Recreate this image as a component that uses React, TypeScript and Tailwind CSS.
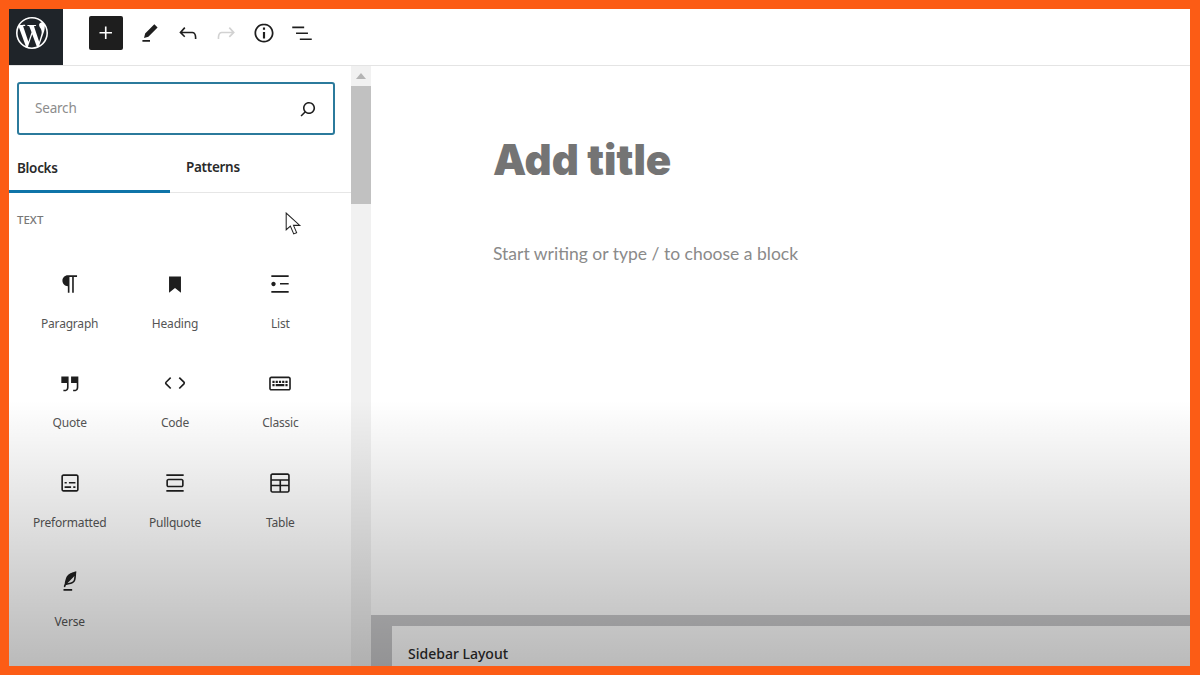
import React from "react";
import { SiWordpress } from "react-icons/si";

const P = ({ d, className = "", size = 24 }: { d: string; className?: string; size?: number }) => (
  <svg width={size} height={size} viewBox="0 0 24 24" fill="currentColor" className={className}>
    <path d={d} />
  </svg>
);

const icons = {
  plus: "M11 12.5V17.5H12.5V12.5H17.5V11H12.5V6H11V11H6V12.5H11Z",
  edit: "m19 7-3-3-8.5 8.5-1 4 4-1L19 7Zm-7 11.5H5V20h7v-1.5Z",
  undo: "M18.3 11.7c-.6-.6-1.4-.9-2.3-.9H6.7l2.9-3.3-1.1-1-4.5 5L8.5 16l1-1-2.7-2.7H16c.5 0 .9.2 1.3.5 1 1 1 3.4 1 4.5v.3h1.5v-.2c0-1.5 0-4.3-1.5-5.7z",
  redo: "M15.6 6.5l-1.1 1 2.9 3.3H8c-.9 0-1.7.3-2.3.9-1.4 1.5-1.4 4.2-1.4 5.6v.2h1.5v-.3c0-1.1 0-3.5 1-4.5.3-.3.7-.5 1.3-.5h9.2L14.5 15l1.1 1.1 4.6-4.6-4.6-5z",
  info: "M12 3.2c-4.8 0-8.8 3.9-8.8 8.8 0 4.8 3.9 8.8 8.8 8.8 4.8 0 8.8-3.9 8.8-8.8 0-4.8-4-8.8-8.8-8.8zm0 16c-4 0-7.2-3.3-7.2-7.2C4.8 8 8 4.8 12 4.8s7.2 3.3 7.2 7.2c0 4-3.2 7.2-7.2 7.2zM11 17h2v-6h-2v6zm0-8h2V7h-2v2z",
  listView: "M3 6h11v1.5H3V6Zm3.5 5.5h11V13h-11v-1.5ZM21 17H10v1.5h11V17Z",
  search: "M13 5c-3.3 0-6 2.7-6 6 0 1.4.5 2.7 1.3 3.7l-3.8 3.8 1.1 1.1 3.8-3.8c1 .8 2.3 1.3 3.7 1.3 3.3 0 6-2.7 6-6S16.3 5 13 5zm0 10.5c-2.5 0-4.5-2-4.5-4.5s2-4.5 4.5-4.5 4.5 2 4.5 4.5-2 4.5-4.5 4.5z",
  paragraph: "m9.99609 14v-.2251l.00391.0001v6.225h1.5v-14.5h2.5v14.5h1.5v-14.5h3v-1.5h-8.50391c-2.76142 0-5 2.23858-5 5 0 2.7614 2.23858 5 5 5z",
  heading: "M6.5 5h11v15l-5.5-4.2L6.5 20z",
  list: "M4 4v1.5h16V4H4zm8 8.5h8V11h-8v1.5zM4 20h16v-1.5H4V20zm4-8c0-1.1-.9-2-2-2s-2 .9-2 2 .9 2 2 2 2-.9 2-2z",
  quote: "M13 6v6h5.2v4c0 .8-.2 1.4-.5 1.7-.6.6-1.6.6-2.5.5h-.3v1.5h.5c1 0 2.3-.1 3.3-1 .6-.6 1-1.6 1-2.8V6H13zm-9 6h5.2v4c0 .8-.2 1.4-.5 1.7-.6.6-1.6.6-2.5.5h-.3v1.5h.5c1 0 2.3-.1 3.3-1 .6-.6 1-1.6 1-2.8V6H4v6z",
  code: "M20.8 10.7l-4.3-4.3-1.1 1.1 4.3 4.3c.1.1.1.3 0 .4l-4.3 4.3 1.1 1.1 4.3-4.3c.7-.8.7-1.9 0-2.6zM4.2 11.8l4.3-4.3-1-1-4.3 4.3c-.7.7-.7 1.8 0 2.5l4.3 4.3 1.1-1.1-4.3-4.3c-.2-.1-.2-.3-.1-.4z",
  classic: "M20 6H4c-1.1 0-2 .9-2 2v9c0 1.1.9 2 2 2h16c1.1 0 2-.9 2-2V8c0-1.1-.9-2-2-2zm.5 11c0 .3-.2.5-.5.5H4c-.3 0-.5-.2-.5-.5V8c0-.3.2-.5.5-.5h16c.3 0 .5.2.5.5v9zM10 10H8v2h2v-2zm-5 2h2v-2H5v2zm8-2h-2v2h2v-2zm-5 5h8v-2H8v2zm6-3h2v-2h-2v2zm3 0h2v-2h-2v2zm0 3h2v-2h-2v2zM5 15h2v-2H5v2z",
  pre: "M18 4H6c-1.1 0-2 .9-2 2v12c0 1.1.9 2 2 2h12c1.1 0 2-.9 2-2V6c0-1.1-.9-2-2-2zm.5 14c0 .3-.2.5-.5.5H6c-.3 0-.5-.2-.5-.5V6c0-.3.2-.5.5-.5h12c.3 0 .5.2.5.5v12zM7 16.5h6V15H7v1.5zm4-4h6V11h-6v1.5zM9 11H7v1.5h2V11zm6 5.5h2V15h-2v1.5z",
  pull: "M18 8H6c-1.1 0-2 .9-2 2v4c0 1.1.9 2 2 2h12c1.1 0 2-.9 2-2v-4c0-1.1-.9-2-2-2zm.5 6c0 .3-.2.5-.5.5H6c-.3 0-.5-.2-.5-.5v-4c0-.3.2-.5.5-.5h12c.3 0 .5.2.5.5v4zM4 4v1.5h16V4H4zm0 16h16v-1.5H4V20z",
  table: "M19 3H5c-1.1 0-2 .9-2 2v14c0 1.1.9 2 2 2h14c1.1 0 2-.9 2-2V5c0-1.1-.9-2-2-2zM5 4.5h14c.3 0 .5.2.5.5v3.5h-15V5c0-.3.2-.5.5-.5zm8 5.5h6.5v3.5H13V10zm-1.5 3.5h-7V10h7v3.5zm-7 5.5v-4h7v4.5H5c-.3 0-.5-.2-.5-.5zm14.5.5h-6V15h6.5v4c0 .3-.2.5-.5.5z",
  verse: "M17.8 2l-.9.3c-.1 0-3.6 1-5.2 2.1C10 5.5 9.3 6.5 8.9 7.1c-.6.9-1.7 4.7-1.7 6.3l-.9 2.3c-.2.4 0 .8.4 1 .1 0 .2.1.3.1.3 0 .6-.2.7-.5l.6-1.5c.3 0 .7-.1 1.2-.2.7-.1 1.4-.3 2.2-.5.8-.2 1.6-.5 2.4-.8.7-.3 1.4-.7 1.9-1.2s.8-1.2 1-1.9c.2-.7.3-1.6.4-2.4.1-.8.1-1.7.2-2.5 0-.8.1-1.5.2-2.1V2zm-1.9 5.6c-.1.8-.2 1.5-.3 2.1-.2.6-.4 1-.6 1.3-.3.3-.8.6-1.4.9-.7.3-1.4.5-2.2.8-.6.2-1.3.3-1.8.4L15 7.5c.3-.3.6-.7 1-1.1 0 .4 0 .8-.1 1.2zM6 20h8v-1.5H6V20z",
};

const blocks: [string, string][] = [
  ["Paragraph", icons.paragraph],
  ["Heading", icons.heading],
  ["List", icons.list],
  ["Quote", icons.quote],
  ["Code", icons.code],
  ["Classic", icons.classic],
  ["Preformatted", icons.pre],
  ["Pullquote", icons.pull],
  ["Table", icons.table],
  ["Verse", icons.verse],
];

export default function App() {
  return (
    <div className="antialiased w-[1200px] h-[675px] overflow-hidden bg-white flex flex-col border-[#fc5c15] border-t-[9px] border-l-[9px] border-r-[10px] border-b-[9px] font-['Noto_Sans',sans-serif]">
      <header className="h-[57px] shrink-0 flex items-start border-b border-[#e4e4e4] bg-white">
        <div className="w-[54px] h-[56px] bg-[#1f2429] flex items-center justify-center text-white pb-[8px] pr-[9px]">
          <SiWordpress size={32} />
        </div>
        <button className="ml-[26px] mt-[7px] w-[34px] h-[34px] rounded-[2px] bg-[#1e1e1e] text-white flex items-center justify-center">
          <P d={icons.plus} size={26} />
        </button>
        <div className="ml-[14px] mt-[11px] flex items-center gap-[12px] text-[#1e1e1e]">
          <P d={icons.edit} size={26} />
          <P d={icons.undo} size={26} />
          <P d={icons.redo} size={26} className="text-[#d2d2d2]" />
          <P d={icons.info} size={26} />
          <P d={icons.listView} size={26} />
        </div>
      </header>

      <div className="relative flex-1 flex min-h-0 overflow-hidden">
        <aside className="w-[342px] shrink-0 flex flex-col">
          <div className="mt-[16px] ml-[8px] w-[318px] h-[53px] rounded-[3px] border-2 border-[#2b7a9c] flex items-center justify-between pl-[16px] pr-[13px]">
            <span className="text-[13.5px] text-[#8c8c8c] tracking-[-0.2px]">Search</span>
            <P d={icons.search} size={24} className="text-[#1e1e1e]" />
          </div>
          <div className="h-[58px] shrink-0 flex border-b border-[#e6e6e6] text-[13.5px] tracking-[-0.3px] font-semibold text-[#2a2a2a]">
            <div className="w-[161px] h-[58px] pl-[8px] pt-[11px] flex items-center border-b-[3px] border-[#0e74a8]">Blocks</div>
            <div className="pl-[16px] pt-[11px] pb-[3px] flex items-center h-[57px]">Patterns</div>
          </div>
          <div className="relative">
            <div className="pl-[8px] pt-[19px] h-[62px] text-[11.5px] leading-[16px] font-medium text-[#777] uppercase">Text</div>
            <svg width="17" height="24" viewBox="0 0 16 23" className="absolute left-[276px] top-[19px]" fill="#fff" stroke="#222" strokeWidth="1">
              <path d="M1 1 L1 17 L5 13.5 L8.2 21 L11 19.8 L8 12.8 L14 12.8 Z" />
            </svg>
            <div className="ml-[8px] w-[316px] grid grid-cols-3">
              {blocks.map(([label, d]) => (
                <div key={label} className="h-[99.33px] flex flex-col items-center pt-[16px]">
                  <P d={d} size={26} className="text-[#1e1e1e]" />
                  <span className="mt-[19px] text-[12px] tracking-[-0.2px] leading-[16px] text-[#555]">{label}</span>
                </div>
              ))}
            </div>
          </div>
        </aside>

        <div className="w-[20px] shrink-0 bg-[#f1f1f1] flex flex-col items-center">
          <div className="h-[20px] flex items-center justify-center">
            <div className="w-0 h-0 border-l-[5px] border-r-[5px] border-b-[6px] border-l-transparent border-r-transparent border-b-[#b4b4b4]" />
          </div>
          <div className="w-full h-[118px] bg-[#c1c1c1]" />
        </div>

        <main className="flex-1 min-w-0 flex flex-col">
          <div className="h-[549px] shrink-0 pl-[122px]">
            <h1 className="mt-[68px] text-[42px] leading-[52px] font-black text-[#747474] font-['Inter',sans-serif]">Add title</h1>
            <p className="mt-[55px] text-[17.5px] leading-[26px] text-[#8a8a8a] font-['Lato',sans-serif]">Start writing or type / to choose a block</p>
          </div>
          <div className="flex-1 bg-[#c9c9cb] pt-[11px] pl-[21px]">
            <div className="h-full bg-white pl-[16px] pt-[16px] text-[14px] leading-[24px] font-medium text-[#2a2a2a]">Sidebar Layout</div>
          </div>
        </main>

        <div className="absolute inset-x-0 bottom-0 h-[266px] pointer-events-none bg-gradient-to-b from-transparent to-black/[.27]" />
      </div>
    </div>
  );
}
